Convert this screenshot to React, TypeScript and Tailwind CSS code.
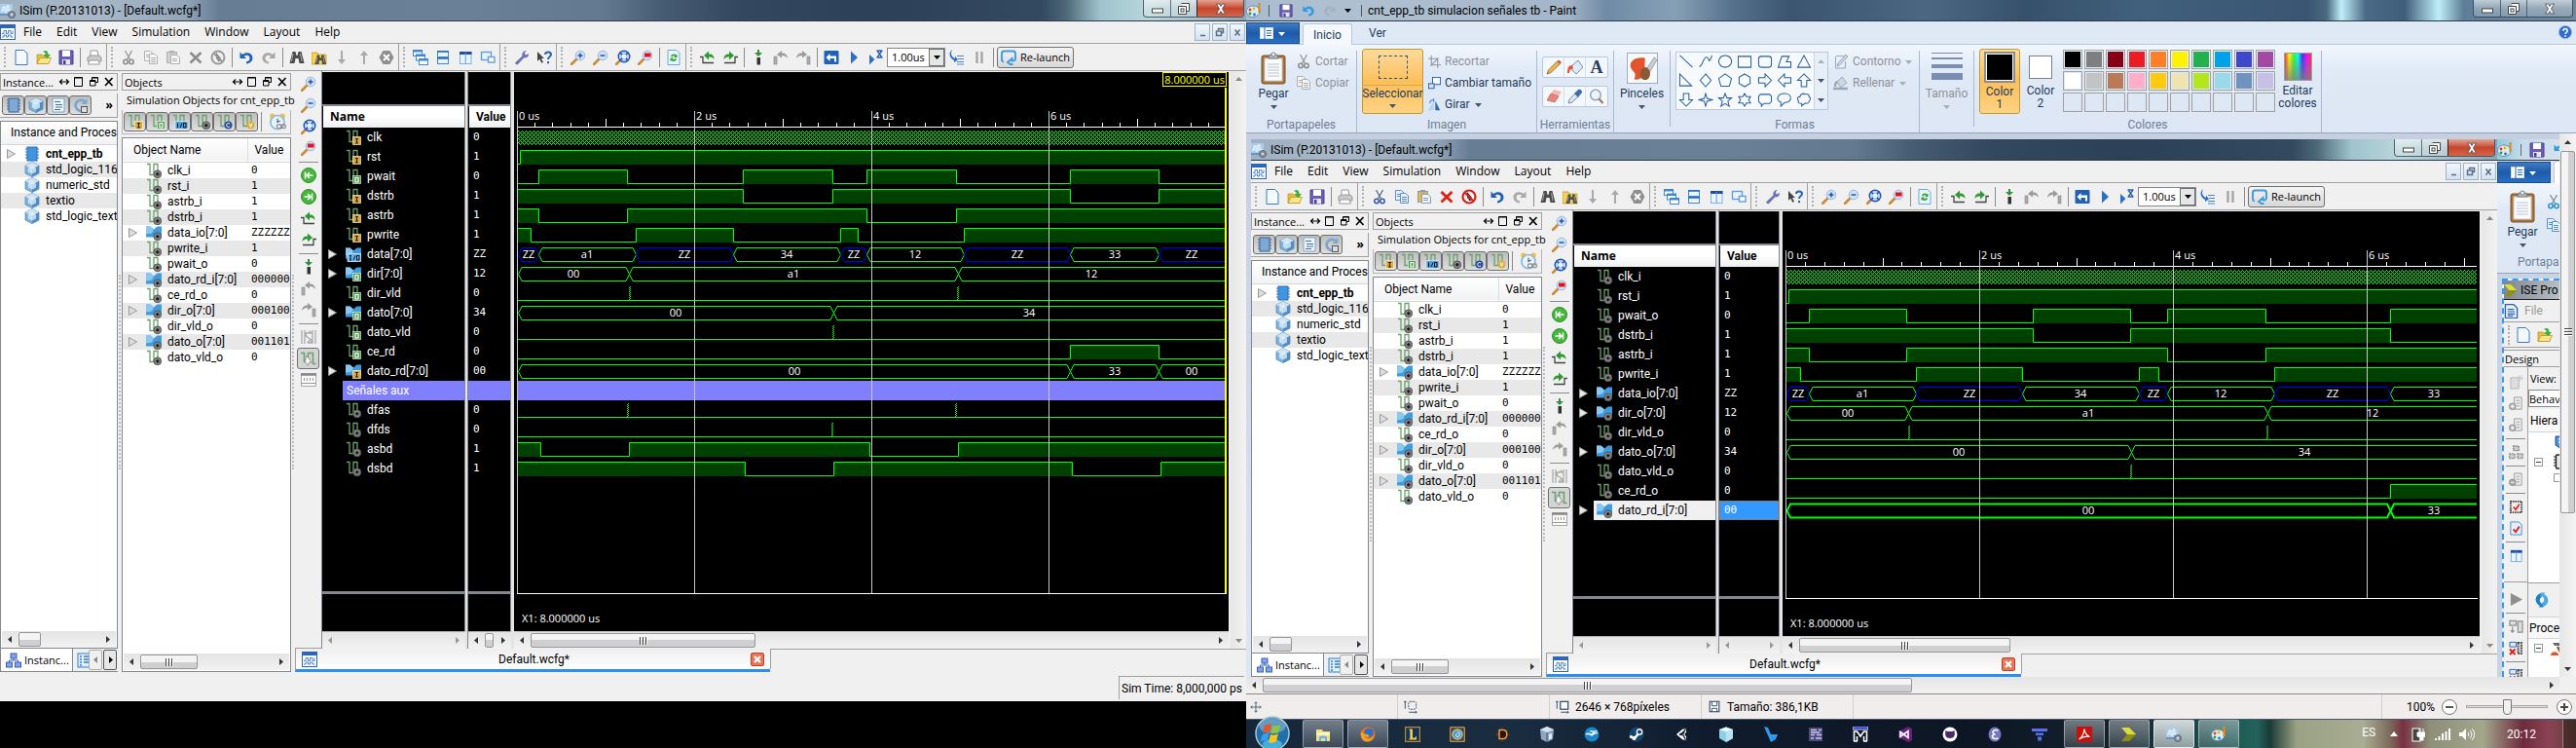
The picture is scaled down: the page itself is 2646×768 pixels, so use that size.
import React from "react";

/* ------------------------------------------------------------------ */
/* Icons                                                                */
/* ------------------------------------------------------------------ */

const GREY = "#9a9a9a";

function magnifier(inner: React.ReactNode) {
  return (
    <>
      <path d="M1 15l5.5-5.5" stroke="#c98b3a" strokeWidth="2.6" strokeLinecap="round" />
      <circle cx="10" cy="6" r="4.8" fill="#cfe2f7" stroke="#9db7d8" />
      {inner}
    </>
  );
}

const scissors = (a: string, b: string) => (
  <>
    <path d="M4.5 1l5 9M11.5 1l-5 9" stroke={a} strokeWidth="1.4" fill="none" />
    <circle cx="5" cy="12.5" r="2.2" stroke={b} strokeWidth="1.5" fill="none" />
    <circle cx="11" cy="12.5" r="2.2" stroke={b} strokeWidth="1.5" fill="none" />
  </>
);

const sheets = (line: string, fill: string) => (
  <>
    <path d="M1.500 1.500h6l2.500 2.500v7.500h-8.500z" fill={fill} stroke={line} />
    <path d="M6.500 4.500h5.500l2.500 2.500v7.500h-8z" fill={fill} stroke={line} />
    <path d="M8 8.500h5M8 10.500h5M8 12.500h5M3 5.500h3M3 7.500h3" stroke={line} />
  </>
);

const clipboard = (board: string, line: string, fill: string) => (
  <>
    <rect x="1.500" y="2.500" width="10" height="11" fill={board} stroke={line} />
    <rect x="4" y="1" width="5" height="2.500" fill={line} />
    <path d="M5.500 5.500h6l3 2.500v6.500h-9z" fill={fill} stroke={line} />
    <path d="M7 9.500h5M7 11.500h5" stroke={line} />
  </>
);

const waveIcon = (badge: React.ReactNode) => (
  <>
    <path d="M1 1.500h3v11h4v-11h4v8" stroke="#6aa06a" strokeWidth="1.300" fill="none" />
    {badge}
  </>
);

const busIcon = (badge: React.ReactNode) => (
  <>
    <path d="M0 1.500h4.500l3.500 3 3.500-3h4.500v11h-16z" fill="#3f9be0" />
    <path d="M0 1.500h4.500l3.500 3-2 4-6 1z" fill="#8ac8f2" />
    {badge}
  </>
);

const plusBadge = (
  <>
    <circle cx="11.800" cy="11.800" r="3.900" fill="#858585" stroke="#555" />
    <path d="M11.800 10v3.600M10 11.800h3.600" stroke="#111" strokeWidth="1.200" />
  </>
);

const glyphBadge = (bg: string, d: string, fg: string) => (
  <>
    <rect x="7.500" y="7.500" width="8" height="8" fill={bg} stroke="#fff" strokeOpacity=".6" />
    <path d={d} stroke={fg} strokeWidth="1.200" fill="none" />
  </>
);

const I_GLYPH = "M10 9.500h3M11.500 9.500v4.500M10 14h3";
const O_GLYPH = "M10 9.500h3v4.500h-3z";

const stepArrow = (c: string, flip: boolean) => (
  <g transform={flip ? "translate(16 0) scale(-1 1)" : undefined}>
    <path d="M0 7.500h3v6h11" stroke="#444" strokeWidth="1.300" fill="none" />
    <path d="M4 6l5-4.500v3c4 0 5.500 2 5.500 5.500-1.500-2-3-2.500-5.500-2.500v3z" fill={c} />
  </g>
);

const hopArrow = (flip: boolean) => (
  <g transform={flip ? "translate(16 0) scale(-1 1)" : undefined}>
    <rect x="1" y="7" width="3" height="8" fill="#aaa" stroke="#888" strokeWidth=".6" />
    <path d="M4 5l5-4v2.600c4 0 5.500 2 6 5.400-1.500-2-3-3-6-3v2.600z" fill="#9b9b9b" />
  </g>
);

const hexStop = (fill: string) => (
  <>
    <path d="M4.500 1h7l4 7-4 7h-7l-4-7z" fill={fill} />
    <path d="M5 5l6 6M11 5l-6 6" stroke="#fff" strokeWidth="2" />
  </>
);

const binoc = (
  <>
    <path d="M3.500 2h3l1 4h1l1-4h3l3 12h-5l-1-5h-3l-1 5h-5z" fill="#4b4b4b" />
    <path d="M4 4l-1.500 8M11.500 4l1.500 8" stroke="#aaa" />
  </>
);

const cube = (
  <>
    <path d="M8 .5l7 3.500v8l-7 3.500-7-3.500v-8z" fill="#7fb2dc" stroke="#5688b5" strokeWidth=".8" />
    <path d="M8 .5l7 3.500-7 3.500-7-3.500z" fill="#cfe5f6" />
    <path d="M8 7.500l7-3.500v8l-7 3.500z" fill="#4f8fc6" />
    <path d="M8 4.500l4 2v4l-4 2-4-2v-4z" fill="#e3f1fb" opacity=".75" />
  </>
);

const palette = (
  <>
    <path d="M7 3c4 0 7 2.300 7 5.500 0 3.500-3.500 6-7 6-4 0-6.500-2.500-6.500-6 0-3 2.500-5.500 6.500-5.500z" fill="#d9ecf5" stroke="#5a8fae" />
    <circle cx="4" cy="7" r="1.400" fill="#e33" />
    <circle cx="8" cy="6" r="1.400" fill="#f5b400" />
    <circle cx="4" cy="11" r="1.400" fill="#2a9d3a" />
    <circle cx="8.500" cy="12" r="1.400" fill="#2b6fd0" />
    <path d="M13.500 0v10" stroke="#e08a20" strokeWidth="2.200" />
  </>
);

const floppy = (
  <>
    <path d="M1 1h14v14h-14z" fill="#6a5fb5" stroke="#4a4190" />
    <rect x="4" y="1" width="8" height="6" fill="#fff" />
    <rect x="4" y="10" width="8" height="5" fill="#e6e6f4" />
    <rect x="5" y="11" width="2.500" height="4" fill="#4a4190" />
  </>
);

const folderArrow = (
  <>
    <path d="M1 5h5l1 1.500h6v8h-12z" fill="#e7bf3c" stroke="#b98f1b" strokeWidth=".7" />
    <path d="M1 14.500l3-6h11.500l-2.800 6z" fill="#fbe58a" stroke="#b98f1b" strokeWidth=".7" />
    <path d="M7 2c3-2 5.500-.5 5.500 3h2.500l-3.800 4-3.700-4h2.200c0-2-1-2.500-2.700-3z" fill="#3cae3c" />
  </>
);

const newDoc = (
  <path d="M2 .5h8.500l3.500 3.500v11.500h-12z" fill="#f4f9ff" stroke="#3f78c3" />
);

const undoPath = "M1.500 2.500v6.500h6.500l-2.300-2.300c2.500-2 5.800-.8 5.800 2 0 2-1.300 3.300-3.500 3.800v2c4-.3 6.500-2.500 6.500-5.900 0-5-6-7-10.500-3.700z";

const ICONS: Record<string, React.ReactNode> = {
  new: newDoc,
  open: folderArrow,
  save: floppy,
  print: (
    <>
      <path d="M4 1h7l1 6h-8z" fill="#fff" stroke={GREY} />
      <path d="M1 8l2-2h10l2 2v4h-14z" fill="#c9c9c9" stroke={GREY} />
      <path d="M3 11h9l1.500 4h-12z" fill="#fff" stroke={GREY} />
    </>
  ),
  cutGrey: scissors(GREY, "#8a8a8a"),
  cut: scissors("#5c6f8c", "#2f5aa8"),
  cutBlue: scissors("#8b8f96", "#2b8fd0"),
  copyGrey: sheets("#b0b0b0", "#f6f6f6"),
  copy: sheets("#5b8fd0", "#e9f3ff"),
  pasteGrey: clipboard("#d0d0d0", "#b0b0b0", "#f6f6f6"),
  paste: clipboard("#e6b84a", "#8a9bb5", "#eef5ff"),
  delGrey: <path d="M2.500 3l11 10.500M13.500 3l-11 10.500" stroke="#8d8d8d" strokeWidth="2.600" />,
  del: <path d="M2.500 3l11 10.500M13.500 3l-11 10.500" stroke="#dd1f14" strokeWidth="2.800" />,
  noselGrey: (
    <>
      <circle cx="8" cy="8" r="6.500" fill="none" stroke={GREY} strokeWidth="2" />
      <path d="M6 3l5 6-2 0 1 3-2 0-1-3-1 1z" fill="#777" />
      <path d="M3.500 3.500l9 9" stroke={GREY} strokeWidth="2" />
    </>
  ),
  nosel: (
    <>
      <circle cx="8" cy="8" r="6.500" fill="none" stroke="#d3221a" strokeWidth="2.200" />
      <path d="M6 3l5 6-2 0 1 3-2 0-1-3-1 1z" fill="#222" />
      <path d="M3.500 3.500l9 9" stroke="#d3221a" strokeWidth="2.200" />
    </>
  ),
  undo: <path d={undoPath} fill="#1d62b8" />,
  redo: <path d={undoPath} transform="translate(16 0) scale(-1 1)" fill="#a8a8a8" />,
  undoLight: <path d={undoPath} fill="#2e9be6" />,
  redoLight: <path d={undoPath} transform="translate(16 0) scale(-1 1)" fill="#9fb3c6" />,
  binoc,
  findFiles: (
    <>
      <path d="M0 3h6l1 2h8v10h-15z" fill="#f3d34f" stroke="#b98f1b" strokeWidth=".7" />
      <g transform="translate(3 4) scale(.78)">{binoc}</g>
    </>
  ),
  down: <path d="M7 1h2v9h3l-4 5-4-5h3z" fill="#a9a9a9" />,
  up: <path d="M7 15h2v-9h3l-4-5-4 5h3z" fill="#a9a9a9" />,
  stop: hexStop("#8f8f8f"),
  cascade: (
    <>
      {[[0.5, 0.5], [3.5, 5], [6.500, 9.500]].map(([x, y]) => (
        <g key={x}>
          <rect x={x} y={y} width="9" height="6" fill="#fff" stroke="#3f87d6" />
          <rect x={x} y={y} width="9" height="2" fill="#3f87d6" />
        </g>
      ))}
    </>
  ),
  tileH: (
    <>
      <rect x="2.500" y="1.500" width="11" height="6" fill="#eaf4ff" stroke="#3f87d6" />
      <rect x="2.500" y="8.500" width="11" height="6" fill="#eaf4ff" stroke="#3f87d6" />
      <path d="M2 2h12M2 9h12" stroke="#2767b8" strokeWidth="1.500" />
    </>
  ),
  tileV: (
    <>
      <rect x="2.500" y="2.500" width="11.500" height="12" fill="#eaf4ff" stroke="#7fb0e4" />
      <path d="M2 3.500h12.500" stroke="#1f4fa0" strokeWidth="3" />
      <path d="M8.200 3v11" stroke="#5f98da" />
    </>
  ),
  layers: (
    <>
      <rect x="1.500" y="2.500" width="10" height="8" fill="#eaf4ff" stroke="#5f9fdf" strokeWidth="1.400" />
      <rect x="8.500" y="7.500" width="6.500" height="5.500" fill="#fff" stroke="#5f9fdf" strokeWidth="1.400" />
    </>
  ),
  wrench: (
    <path d="M1.500 13l7-6.500c-.8-3 1-5.500 4.200-5.500l-2 2.500 1.300 2 3-1.500c.3 3-2 4.800-4.700 4.300l-6.300 6.700c-1.500 1-3.500-.5-2.500-2z" fill="#6c72b8" />
  ),
  whats: (
    <>
      <path d="M1 2l7 7h-3l2 4-1.800.8-1.800-4-2.400 2z" fill="#444" />
      <path d="M9 5c0-3.500 6-3.500 6 0 0 2.300-3 2.300-3 5M12 12v2.200" stroke="#2a62b5" strokeWidth="2" fill="none" />
    </>
  ),
  zoomIn: magnifier(<path d="M10 3.500v5M7.500 6h5" stroke="#2355b0" strokeWidth="1.500" />),
  zoomOut: magnifier(<path d="M7.500 6h5" stroke="#2355b0" strokeWidth="1.500" />),
  zoomFit: (
    <>
      <path d="M1 15l3-3" stroke="#c98b3a" strokeWidth="2.600" strokeLinecap="round" />
      <circle cx="9" cy="7" r="5.800" fill="#bcd6f5" stroke="#2355b0" strokeWidth="1.400" />
      <path d="M4.500 2.500l9 9M13.500 2.500l-9 9" stroke="#2355b0" strokeWidth="1.600" />
      <rect x="7" y="5" width="4" height="4" fill="#e6f1ff" />
    </>
  ),
  zoomRed: magnifier(<rect x="7" y="3.500" width="6.500" height="4" fill="#e8101c" />),
  refreshDoc: (
    <>
      <path d="M2 .5h9l3 3v12h-12z" fill="#eaf6ff" stroke="#6aa9dd" />
      <path d="M5 7c1-3 4-3 5.500-1.500l1-1v3.500h-3.500l1.200-1.200c-1.200-.8-2.200-.5-2.700.6zM11 9.500c-1 3-4 3-5.500 1.500l-1 1v-3.500h3.500l-1.200 1.200c1.200.8 2.200.5 2.700-.6z" fill="#2fa32f" />
    </>
  ),
  prevTrans: stepArrow("#2f9a2f", false),
  nextTrans: stepArrow("#2f9a2f", true),
  addMarker: (
    <>
      <path d="M7 0h2v3h3l-4 4-4-4h3z" fill="#2f8f3a" />
      <rect x="6.500" y="8" width="3.500" height="7.500" fill="#333" />
    </>
  ),
  prevMarker: hopArrow(false),
  nextMarker: hopArrow(true),
  restart: (
    <>
      <rect x=".5" y="1" width="15" height="14" rx="1" fill="#1f62b5" />
      <path d="M2.500 8l4-4v2.500h6.500v6h-2v-3.500h-4.500v3z" fill="#fff" />
    </>
  ),
  run: <path d="M5 1.500l7 6.500-7 6.500z" fill="#2b6fc6" />,
  runFor: (
    <>
      <path d="M1 5l5.500 5-5.500 5.500z" fill="#2b6fc6" />
      <path d="M8.500 1h6M8.500 8h6M9 1l5 7M14 1l-5 7" stroke="#2b5fa8" strokeWidth="1.300" />
    </>
  ),
  stepIn: (
    <>
      <path d="M3 0c-2 4-1 7 3 9v-2.500l3 4-4 2.500v-2c-5-2-6-8-2-11z" fill="#2b6fc6" />
      <path d="M8 6.500h7M9 9.500h6M8 12.500h7M8 15h7" stroke="#4a86c8" />
    </>
  ),
  pause: <path d="M5.500 2v12M10.500 2v12" stroke="#a5a5a5" strokeWidth="2.400" />,
  relaunch: (
    <path d="M3 12.500c-1.500 0-2-1-2-2.500v-6c0-1.700.7-2.500 2.500-2.500h9c1.700 0 2.500.8 2.500 2.500v5c0 1.700-1 2.500-2.500 2.500h-1v-2.500l-4.500 4 4.500 3.500v-2.500" fill="none" stroke="#3d9be0" strokeWidth="1.900" />
  ),
  goStart: (
    <>
      <circle cx="8" cy="8" r="7.500" fill="#47b63c" stroke="#2c8f24" />
      <path d="M4.500 4.500v7M12.500 8h-6M9 5l-3 3 3 3" stroke="#fff" strokeWidth="1.500" fill="none" />
    </>
  ),
  goEnd: (
    <>
      <circle cx="8" cy="8" r="7.500" fill="#47b63c" stroke="#2c8f24" />
      <path d="M11.500 4.500v7M3.500 8h6M7 5l3 3-3 3" stroke="#fff" strokeWidth="1.500" fill="none" />
    </>
  ),
  swap: (
    <>
      <path d="M1 1v14M4 1v14M12 1v14M15 1v14" stroke="#aaa" strokeWidth="1.300" />
      <path d="M5 4h6l-2-2.500M5 4v3l6 4v3l-4 0 2-3" stroke="#8f8f8f" fill="#ddd" />
    </>
  ),
  snap: (
    <>
      <path d="M0 2.500h3.500v9h4v-9h5v11h3" stroke="#6aa06a" strokeWidth="1.500" fill="none" />
      <path d="M6 5l5 7-2.600 0-1 3.500-3-4z" fill="#fff" stroke="#777" strokeWidth=".7" />
    </>
  ),
  ruler: (
    <>
      <rect x=".5" y="1.500" width="15" height="13" fill="#fafafa" stroke="#aaa" />
      <path d="M0 2.500h16" stroke="#888" strokeWidth="2.500" />
      <path d="M3.500 6v3M6.500 6v3M9.500 6v3M12.500 6v3M0 11.500h16" stroke="#999" />
    </>
  ),
  chip: (
    <>
      <path d="M1 3h14M1 6h14M1 9h14M1 12h14" stroke="#2c6eb5" strokeWidth="1.200" />
      <rect x="3" y="1" width="10" height="14" fill="#3f95e0" stroke="#2c6eb5" />
    </>
  ),
  chipBox: (
    <>
      <path d="M1 3h14M1 6h14M1 9h14M1 12h14" stroke="#39658f" strokeWidth="1.200" />
      <rect x="3" y="1" width="10" height="14" fill="#7fa8d6" stroke="#39658f" />
    </>
  ),
  cube,
  docLines: (
    <>
      <path d="M2 1h12v14h-12z" fill="#eef6fd" stroke="#7aa6cf" />
      <path d="M4 4.500h6M5 7.500h7M5 10h7M4 12.500h6" stroke="#4a6f96" />
    </>
  ),
  docBlue: (
    <>
      <path d="M1.500 .5h9l4 4v11h-13z" fill="#e6f0fb" stroke="#2b62b5" strokeWidth="1.400" />
      <path d="M4 6h7M4 8.500h8M4 11h8M4 13.200h6" stroke="#2b62b5" strokeWidth="1.200" />
    </>
  ),
  cycle: (
    <>
      <path d="M12 4.500a5.500 5.500 0 1 0 1.500 5" stroke="#7ba7d0" strokeWidth="2.800" fill="none" />
      <path d="M14.500 1v6h-6z" fill="#7ba7d0" />
      <rect x="8.500" y="9.500" width="6" height="6" fill="#ddd" stroke="#555" />
    </>
  ),
  wave: waveIcon(plusBadge),
  waveI: waveIcon(glyphBadge("#e3a92c", I_GLYPH, "#222")),
  waveO: waveIcon(glyphBadge("#4f9e4c", O_GLYPH, "#fff")),
  waveIO: waveIcon(
    <>
      <rect x="3" y="7.500" width="13" height="8" fill="#4aa3dd" stroke="#fff" strokeOpacity=".6" />
      <path d="M5.500 9.500v4.500M8 14l2-4.500M11.500 9.500h2.500v4.500h-2.500z" stroke="#112" fill="none" />
    </>,
  ),
  waveC: waveIcon(
    <>
      <circle cx="11.500" cy="11.500" r="4" fill="#2a4f9d" />
      <path d="M13 10a2 2 0 1 0 0 3" stroke="#fff" fill="none" />
    </>,
  ),
  waveV: waveIcon(
    <>
      <circle cx="11.500" cy="11.500" r="4" fill="#e0ae3a" />
      <path d="M10 9.500l1.500 4 1.500-4" stroke="#fff" fill="none" />
    </>,
  ),
  bus: busIcon(plusBadge),
  busI: busIcon(glyphBadge("#e3a92c", I_GLYPH, "#222")),
  busO: busIcon(glyphBadge("#4f9e4c", O_GLYPH, "#fff")),
  busIO: busIcon(
    <>
      <rect x="2" y="7.500" width="13.500" height="8" fill="#63b4ea" stroke="#d5ecfa" strokeWidth=".8" />
      <path d="M4 9.500h2M5 9.500v4.500M4 14h2M8 14l2-4.500M11.500 9.500h2.500v4.500h-2.500z" stroke="#112" fill="none" />
    </>,
  ),
  clock: (
    <>
      <circle cx="3.500" cy="3" r="2.500" fill="#f0c04a" />
      <circle cx="12.500" cy="3" r="2.500" fill="#f0c04a" />
      <circle cx="8" cy="8.500" r="6.300" fill="#e8f3fb" stroke="#8dbbdd" strokeWidth="1.500" />
      <path d="M8 5v3.500l2.500-1.500" stroke="#557" fill="none" />
      <rect x="7.500" y="10.500" width="4" height="3.500" rx="1.500" fill="none" stroke="#888" />
      <rect x="11.500" y="10.500" width="4" height="3.500" rx="1.500" fill="none" stroke="#888" />
    </>
  ),
  wcfg: (
    <>
      <rect x=".5" y=".5" width="15" height="15" fill="#fff" stroke="#2d66b8" />
      <rect x="0" y="0" width="16" height="4" fill="#2d66b8" />
      <path d="M2 9.500h2v-3h2.500v3h2v-3h2.500v3h2v-3M2 13h2v-2h2.500v2h2v-2h2.500v2h2.500" stroke="#4a80d0" fill="none" />
    </>
  ),
  hier: (
    <>
      <rect x="5" y="1" width="6" height="5" fill="#7fa5e8" stroke="#3b5fb5" />
      <rect x="0.500" y="10" width="6" height="5" fill="#7fa5e8" stroke="#3b5fb5" />
      <rect x="9.500" y="10" width="6" height="5" fill="#7fa5e8" stroke="#3b5fb5" />
      <path d="M8 6v2M3.500 10v-2h9v2" stroke="#3b5fb5" fill="none" />
    </>
  ),
  memory: (
    <>
      <rect x="1" y="1" width="13" height="14" fill="#e3f0fb" stroke="#2d7fcf" />
      <path d="M3 4h2M7 4h6M3 7h2M7 7h6M3 10h2M7 10h6M3 13h2" stroke="#2d7fcf" strokeWidth="1.500" />
    </>
  ),
  isim: (
    <>
      <rect x="0" y="1" width="13" height="12" fill="#a9cdea" />
      <path d="M1 8h2v-4h2v5h2v-6h2v5h3" stroke="#fff" fill="none" />
      <path d="M0 11h13v2h-13z" fill="#6b93bd" />
      <circle cx="12" cy="12" r="3.500" fill="#8a94a0" stroke="#596470" />
      <circle cx="12" cy="12" r="1.200" fill="#dde" />
    </>
  ),
  palette,
  crop: <path d="M4 0v12h12M0 4h12v12M3 13l10-10" stroke="#8a94a4" strokeWidth="1.300" fill="none" />,
  resize: (
    <>
      <rect x="5.500" y=".5" width="10" height="9" fill="#f4f9ff" stroke="#2a5f9e" strokeWidth="1.200" />
      <rect x=".5" y="8.500" width="7" height="6" fill="#cfe4f7" stroke="#2a5f9e" strokeWidth="1.200" />
    </>
  ),
  rotate: (
    <>
      <path d="M7 15v-12l-7 12z" fill="#b9d4ec" />
      <path d="M9 3v12h6z" fill="#2a6cb3" />
      <path d="M2 6c0-3 2-4 5-4M7 0v4.500" stroke="#3f8fd8" fill="none" strokeWidth="1.300" />
    </>
  ),
  pencil: (
    <>
      <path d="M1 15l1.500-4 9-9 3 2.500-9.500 9z" fill="#f0b84a" stroke="#7a5a2a" strokeWidth=".8" />
      <path d="M11.500 2l1.500-1.500 3 2.500-1.500 1.500z" fill="#c65a3a" />
    </>
  ),
  bucket: (
    <>
      <path d="M5 6l6-5 5 7-7 7-5-5z" fill="#dfeaf6" stroke="#6f8fb3" />
      <path d="M0 14c0-5 1-8 5-8l1 4c-3-1-4 1-4 4z" fill="#e2552c" />
    </>
  ),
  eraser: (
    <>
      <path d="M5 5l3-4 8 2-3 5z" fill="#f6b8ae" />
      <path d="M1 12l4-7 8 3-4 6z" fill="#e5857a" stroke="#b8655c" strokeWidth=".7" />
    </>
  ),
  picker: (
    <>
      <path d="M1 15l1-4 6-6 3 3-6 6z" fill="#d9e6f3" stroke="#6f8299" strokeWidth=".9" />
      <path d="M7 5l4-4c3-1 4 1 4 3l-4 5z" fill="#3c70ad" />
    </>
  ),
  lens: (
    <>
      <path d="M10 10l4.500 5" stroke="#a07a50" strokeWidth="2.200" />
      <circle cx="7" cy="6.500" r="5.300" fill="#e8f3fb" stroke="#8d99a8" strokeWidth="1.300" />
    </>
  ),
  outline: (
    <>
      <path d="M3 2.500h9M2.500 3v12h10v-7" stroke="#9aa8b8" fill="none" />
      <path d="M4 13l1-3 8-9 2 2-8 8.500z" fill="#cdd6e0" stroke="#9aa8b8" />
    </>
  ),
  fill: (
    <>
      <path d="M4 7l5-5 5 6-6 5z" fill="#cdd6e0" stroke="#9aa8b8" />
      <path d="M0 14h15M2 12c0-4 1-5 3-5" stroke="#9aa8b8" strokeWidth="2.400" fill="none" />
    </>
  ),
  helpRound: (
    <>
      <circle cx="8" cy="8" r="7.500" fill="#2f6cd0" stroke="#8fb2e8" />
      <path d="M5.500 6.500c0-3.500 5-3.500 5 0 0 2-2.500 1.800-2.500 3.800M8 11.500v2" stroke="#fff" strokeWidth="1.700" fill="none" />
    </>
  ),
  move: <path d="M8 1v14M1 8h14M6 3l2-2 2 2M6 13l2 2 2-2M3 6l-2 2 2 2M13 6l2 2-2 2" stroke="#24405e" fill="none" />,
  selSize: (
    <>
      <path d="M1.500 1v9M0 2.500l1.500-1.500 1.500 1.500" stroke="#24405e" fill="none" />
      <rect x="5.500" y="1.500" width="9" height="9" rx="2" fill="none" stroke="#24405e" strokeDasharray="2 1" />
      <path d="M6 14h9M13.500 12.500l1.500 1.500-1.500 1.500" stroke="#24405e" fill="none" />
    </>
  ),
  imgSize: (
    <>
      <path d="M1.500 1v9M0 2.500l1.500-1.500 1.500 1.500" stroke="#24405e" fill="none" />
      <rect x="5.500" y="1.500" width="9" height="9" fill="#fff" stroke="#24405e" strokeWidth="1.300" />
      <path d="M6 14h9M13.500 12.500l1.500 1.500-1.500 1.500" stroke="#24405e" fill="none" />
    </>
  ),
  disk: (
    <>
      <path d="M2.500 1.500h11v12h-11z" fill="#fff" stroke="#24405e" strokeWidth="1.200" />
      <path d="M5 2v4.500h6v-4.500M5 13.500v-4h6v4" stroke="#24405e" fill="none" />
    </>
  ),
  ise: (
    <>
      <path d="M0 1h8l7 7-7 7h-8l6-7z" fill="#8f8f18" />
      <path d="M0 1h8l7 7h-9z" fill="#dcdc3c" />
    </>
  ),
  plusDocGrey: (
    <>
      <path d="M6 1h8v13h-8zM8 4.500h4M8 7.500h4M8 10.500h4" fill="#eee" stroke="#9a9a9a" />
      <circle cx="4" cy="11" r="3.500" fill="#bbb" stroke="#8a8a8a" />
      <path d="M4 9v4M2 11h4" stroke="#fff" />
    </>
  ),
  minusDocGrey: (
    <>
      <path d="M6 1h8v13h-8zM8 4.500h4M8 7.500h4M8 10.500h4" fill="#eee" stroke="#9a9a9a" />
      <circle cx="4" cy="11" r="3.500" fill="#aaa" stroke="#8a8a8a" />
      <path d="M2 11h4" stroke="#fff" />
    </>
  ),
  newSrcGrey: (
    <>
      <path d="M2 3h9v12h-9z" fill="#ddd" stroke="#b5b5b5" />
      <path d="M12 0v7M9 3.500h7M10 1l5 5M15 1l-5 5" stroke="#c9c9c9" />
    </>
  ),
  modules: (
    <path d="M5 1h6v5h-6zM.500 9.500h6v5h-6zM9.500 9.500h6v5h-6z" fill="#ccc" stroke="#8a8a8a" strokeDasharray="2 1" strokeWidth="1.500" />
  ),
  chipCheck: (
    <>
      <rect x="2" y="2" width="12" height="12" fill="#eee" stroke="#333" strokeWidth="2" strokeDasharray="1.500 1" />
      <path d="M5 8l2.500 3 4-6" stroke="#d22" strokeWidth="1.800" fill="none" />
    </>
  ),
  chipBlack: (
    <>
      <path d="M0 3h16M0 6h16M0 9h16M0 12h16" stroke="#222" strokeWidth="1.200" />
      <rect x="2.500" y="1" width="11" height="14" rx="1" fill="#e8e8e8" stroke="#222" strokeWidth="1.400" />
    </>
  ),
  docCheck: (
    <>
      <path d="M2 1h9l3 3v11h-12z" fill="#e2f0fd" stroke="#4a8ad0" />
      <path d="M5 9l2.500 3 4-6" stroke="#d22" strokeWidth="2" fill="none" />
    </>
  ),
  runGrey: <path d="M2 1l13 7-13 7z" fill="#8f8f8f" />,
  sync: (
    <>
      <path d="M7 1c-7 2-7 10-1 13l-1.500 1.500h5v-5l-1.500 1.500c-3-2-3-6 0-7z" fill="#1f7fc4" />
      <path d="M9 15c7-2 7-10 1-13l1.500-1.500h-5v5l1.500-1.500c3 2 3 6 0 7z" fill="#4aa9e0" />
    </>
  ),
  procGrey: (
    <path d="M1 1.500h7v5h-7zM10 2h5v12h-5zM4 8v6M2 12l2 2 2-2" fill="#ddd" stroke="#8f8f8f" strokeWidth="1.300" />
  ),
  procStop: (
    <>
      <path d="M1 1.500h7v5h-7z" fill="#dcebff" stroke="#2b62b5" />
      <path d="M10 2h4v12h-4z" fill="#ccc" stroke="#444" strokeWidth="1.800" strokeDasharray="2 1" />
      <path d="M1 9l6 6M7 9l-6 6" stroke="#e02018" strokeWidth="2.200" />
    </>
  ),
  device: (
    <>
      <path d="M2 2h12v9l-6 4-6-4z" fill="#3f95e0" stroke="#24508c" />
      <path d="M5 5h6M5 8h6" stroke="#fff" strokeWidth="1.500" />
    </>
  ),
  hammer: (
    <>
      <path d="M2 2h9l3 3-3 2-2-2-5 0z" fill="#6b6b6b" />
      <path d="M7 6l5 9" stroke="#8b5a2b" strokeWidth="2.500" />
      <path d="M0 15c0-5 8-5 8 0z" fill="#e2552c" />
    </>
  ),
};

function Icon({ name, size = "size-4" }: { name: string; size?: string }) {
  return (
    <svg viewBox="0 0 16 16" className={`${size} shrink-0`} fill="none" aria-hidden="true">
      {ICONS[name]}
    </svg>
  );
}

const UI = "font-[Roboto,'Open_Sans',sans-serif] text-xs";
const HEAD = "font-['Open_Sans','Noto_Sans',sans-serif] text-xs";
const SMALL = "font-['Open_Sans','Noto_Sans',sans-serif] text-[11px]";
const MONO = "font-['DejaVu_Sans_Mono',monospace] text-[11px]";

/* ------------------------------------------------------------------ */
/* Scroll bars                                                          */
/* ------------------------------------------------------------------ */

function Tri({ dir, tone = "text-[#333]" }: { dir: "left" | "right" | "up" | "down"; tone?: string }) {
  const d = {
    left: "M6 1v7l-4-3.500z",
    right: "M3 1v7l4-3.500z",
    up: "M1 6h7l-3.500-4z",
    down: "M1 3h7l-3.500 4z",
  }[dir];
  return (
    <svg viewBox="0 0 9 9" className={`size-[9px] ${tone}`} aria-hidden="true">
      <path d={d} fill="currentColor" />
    </svg>
  );
}

function HScroll({ thumb, grip = false }: { thumb?: string; grip?: boolean }) {
  const tone = thumb ? "text-[#333]" : "text-[#999]";
  return (
    <div className="flex h-[17px] w-full shrink-0 items-stretch overflow-hidden bg-gradient-to-b from-[#e4e4e4] to-[#f2f2f2]">
      <button aria-label="Scroll left" className="flex w-[17px] shrink items-center justify-center">
        <Tri dir="left" tone={tone} />
      </button>
      {thumb && (
        <div className={`${thumb} my-px flex items-center justify-center gap-px rounded-xs border border-[#979797] bg-gradient-to-b from-[#f4f4f4] from-50% to-[#cfcfd1] to-50%`}>
          {grip && [0, 1, 2].map((i) => <span key={i} className="h-2 w-[2px] border-l border-[#444] bg-white" />)}
        </div>
      )}
      <span className="flex-1" />
      <button aria-label="Scroll right" className="flex w-[17px] shrink items-center justify-center">
        <Tri dir="right" tone={tone} />
      </button>
    </div>
  );
}

/* ------------------------------------------------------------------ */
/* Window buttons                                                       */
/* ------------------------------------------------------------------ */

function CaptionButtons({ active }: { active: boolean }) {
  const base = "flex h-full items-center justify-center border-l border-[#33414f]/70 bg-gradient-to-b from-white/60 via-white/30 via-50% to-white/20";
  return (
    <div className="flex h-[18px] shrink-0 overflow-hidden rounded-b-sm border border-t-0 border-[#33414f]/80">
      <button aria-label="Minimizar" className={`${base} w-[27px] border-l-0`}>
        <svg viewBox="0 0 12 12" className="size-3"><rect x="0.500" y="6" width="11" height="4" fill="#fff" stroke="#444" /></svg>
      </button>
      <button aria-label="Restaurar" className={`${base} w-[27px]`}>
        <svg viewBox="0 0 12 12" className="size-3"><path d="M3.500.5h8v8h-2.500M.5 3.500h8v8h-8z" fill="#fff" stroke="#444" /><rect x="3" y="6" width="3" height="3" fill="none" stroke="#444" /></svg>
      </button>
      <button
        aria-label="Cerrar"
        className={active ? "flex w-12 items-center justify-center border-l border-[#431818] bg-gradient-to-b from-[#e0a395] via-[#c6452b] via-50% to-[#d4654a]" : `${base} w-[47px]`}
      >
        <svg viewBox="0 0 12 12" className="size-3"><path d="M1.500 1h3l1.500 2.500 1.500-2.500h3l-3 5 3 5h-3l-1.500-2.500-1.500 2.500h-3l3-5z" fill="#fff" stroke="#444" strokeWidth=".8" /></svg>
      </button>
    </div>
  );
}

/* ------------------------------------------------------------------ */
/* Waveforms                                                            */
/* ------------------------------------------------------------------ */

type Kind = "clock" | "level" | "bus" | "band";
interface Trace {
  name: string;
  value: string;
  icon: string;
  kind: Kind;
  /* level: first state followed by toggle times (us) */
  start?: 0 | 1;
  edges?: number[];
  spikes?: number[];
  /* bus: [end time, text] */
  segs?: [number, string][];
}

const END = 8;

const T_PWAIT = [0.236, 1.236, 2.54, 3.545, 3.934, 4.94, 6.236, 7.236];
const T_DSTRB = [2.54, 3.545, 6.236, 7.236];
const T_ASTRB = [0.236, 1.236, 3.934, 4.94];
const T_PWRITE = [0.143, 1.335, 2.434, 3.637, 3.84, 5.033];
const B_DATA: [number, string][] = [
  [0.236, "ZZ"], [1.335, "a1"], [2.434, "ZZ"], [3.637, "34"], [3.934, "ZZ"],
  [5.033, "12"], [6.236, "ZZ"], [7.236, "33"], [END + 1, "ZZ"],
];
const B_DIR: [number, string][] = [[1.258, "00"], [4.962, "a1"], [END + 1, "12"]];
const B_DATO: [number, string][] = [[3.555, "00"], [END + 1, "34"]];
const B_DATO_RD: [number, string][] = [[6.236, "00"], [7.236, "33"], [END + 1, "00"]];

const LEFT_TRACES: Trace[] = [
  { name: "clk", value: "0", icon: "waveI", kind: "clock" },
  { name: "rst", value: "1", icon: "waveI", kind: "level", start: 0, edges: [0.022] },
  { name: "pwait", value: "0", icon: "waveO", kind: "level", start: 0, edges: T_PWAIT },
  { name: "dstrb", value: "1", icon: "waveI", kind: "level", start: 1, edges: T_DSTRB },
  { name: "astrb", value: "1", icon: "waveI", kind: "level", start: 1, edges: T_ASTRB },
  { name: "pwrite", value: "1", icon: "waveI", kind: "level", start: 1, edges: T_PWRITE },
  { name: "data[7:0]", value: "ZZ", icon: "busIO", kind: "bus", segs: B_DATA },
  { name: "dir[7:0]", value: "12", icon: "busO", kind: "bus", segs: B_DIR },
  { name: "dir_vld", value: "0", icon: "waveO", kind: "level", start: 0, spikes: [1.263, 4.967] },
  { name: "dato[7:0]", value: "34", icon: "busO", kind: "bus", segs: B_DATO },
  { name: "dato_vld", value: "0", icon: "waveO", kind: "level", start: 0, spikes: [3.56] },
  { name: "ce_rd", value: "0", icon: "waveO", kind: "level", start: 0, edges: [6.236, 7.236] },
  { name: "dato_rd[7:0]", value: "00", icon: "busI", kind: "bus", segs: B_DATO_RD },
  { name: "Señales aux", value: "", icon: "", kind: "band" },
  { name: "dfas", value: "0", icon: "wave", kind: "level", start: 0, spikes: [1.24, 4.945] },
  { name: "dfds", value: "0", icon: "wave", kind: "level", start: 0, spikes: [3.545] },
  { name: "asbd", value: "1", icon: "wave", kind: "level", start: 1, edges: [0.258, 1.258, 3.962, 4.962] },
  { name: "dsbd", value: "1", icon: "wave", kind: "level", start: 1, edges: [2.556, 3.555, 6.258, 7.258] },
];

const RIGHT_NAMES = [
  "clk_i", "rst_i", "pwait_o", "dstrb_i", "astrb_i", "pwrite_i", "data_io[7:0]",
  "dir_o[7:0]", "dir_vld_o", "dato_o[7:0]", "dato_vld_o", "ce_rd_o", "dato_rd_i[7:0]",
];
const RIGHT_TRACES: Trace[] = RIGHT_NAMES.map((name, i) => ({
  ...LEFT_TRACES[i],
  name,
  icon: LEFT_TRACES[i].kind === "bus" ? "bus" : "wave",
}));

const ROW0 = 57;
const ROW = 20;
const X0 = 4;
const GREEN = "#00ff00";

function TraceShape({ t, y, scale, endX, thick }: { t: Trace; y: number; scale: number; endX: number; thick: boolean }) {
  const px = (us: number) => Math.min(endX, Math.round(X0 + us * scale));
  const hi = y + 3.5;
  const lo = y + 17.5;
  const mid = y + 10.5;
  if (t.kind === "clock") return <rect x={X0} y={y + 3} width={endX - X0} height={15} fill="url(#hatch)" />;
  if (t.kind === "band") return <rect x={X0} y={y} width={endX - X0} height={20} fill="#8080ff" />;
  if (t.kind === "level") {
    let state = t.start ?? 0;
    let x = X0;
    let d = `M${x} ${state ? hi : lo}`;
    const fills: [number, number][] = [];
    for (const e of [...(t.edges ?? []), END + 1]) {
      const nx = px(e);
      if (state) fills.push([x, nx]);
      if (nx >= endX) {
        d += `H${nx}`;
        break;
      }
      d += `H${nx + 0.5}`;
      state = state ? 0 : 1;
      d += `V${state ? hi : lo}`;
      x = nx;
    }
    return (
      <g>
        {fills.map(([a, b]) => <rect key={a} x={a} y={y + 4} width={b - a} height={14} fill="#004000" />)}
        <path d={d} stroke={GREEN} fill="none" />
        {(t.spikes ?? []).map((s) => (
          <g key={s} stroke={GREEN} strokeDasharray="1 1">
            <path d={`M${px(s) + 0.5} ${y + 3}V${y + 18}`} />
            <path d={`M${px(s) - 0.5} ${y + 4}V${y + 18}`} />
          </g>
        ))}
      </g>
    );
  }
  let from = 0;
  return (
    <g>
      {(t.segs ?? []).map(([end, text]) => {
        const a = px(from);
        const b = px(end);
        from = end;
        if (a >= endX) return null;
        const open = b >= endX;
        const colour = text === "ZZ" ? "#0000ff" : GREEN;
        const d = open
          ? `M${b} ${hi}H${a + 4}L${a + 0.5} ${mid}L${a + 4} ${lo}H${b}`
          : `M${b + 0.5} ${mid}L${b - 3} ${hi}H${a + 4}L${a + 0.5} ${mid}L${a + 4} ${lo}H${b - 3}Z`;
        return (
          <g key={a}>
            <path d={d} stroke={colour} strokeWidth={thick ? 2 : 1} fill="none" />
            <text x={Math.round((a + b) / 2)} y={y + 14} fill="#fff" textAnchor="middle" className={SMALL}>{text}</text>
          </g>
        );
      })}
    </g>
  );
}

function WaveCanvas({ traces, scale, endX, cursor, thickRow }: { traces: Trace[]; scale: number; endX: number; cursor: boolean; thickRow: number }) {
  const ticks = Array.from({ length: 40 }, (_, i) => i).filter((i) => X0 + i * 0.2 * scale < endX);
  return (
    <svg className="block size-full" aria-label="Waveforms">
      <defs>
        <pattern id="hatch" width="4" height="4" patternUnits="userSpaceOnUse">
          <path d="M0 0h1v1h-1zM1 1h1v1h-1zM3 1h1v1h-1zM2 2h1v1h-1zM1 3h1v1h-1zM3 3h1v1h-1z" fill={GREEN} />
        </pattern>
      </defs>
      {ticks.map((i) => {
        const x = Math.round(X0 + i * 0.2 * scale) - 0.5;
        return <path key={i} d={`M${x} ${i % 10 === 0 ? 40 : i % 5 === 0 ? 48 : 52}V56`} stroke="#fff" />;
      })}
      <path d={`M${X0} 56.500H${endX}`} stroke="#fff" />
      {[0, 2, 4, 6].map((u) => (
        <text key={u} x={Math.round(X0 + u * scale) + 1} y={49} fill="#fff" className={SMALL}>{u} us</text>
      ))}
      {traces.map((t, i) => (
        <TraceShape key={t.name} t={t} y={ROW0 + i * ROW} scale={scale} endX={endX} thick={i === thickRow} />
      ))}
      {[0, 2, 4, 6].map((u) => (
        <rect key={u} x={Math.round(X0 + u * scale) - 1} y={40} width={1} height="100%" fill="#c8c8c8" />
      ))}
      {cursor && <rect x={endX} y={16} width={2} height="100%" fill="#ffff00" />}
    </svg>
  );
}

/* ------------------------------------------------------------------ */
/* ISim window                                                          */
/* ------------------------------------------------------------------ */

function toolItems(editable: boolean): string[] {
  const e = (n: string) => (editable ? n : `${n}Grey`);
  return [
    "#", "new", "open", "save", "|", "print",
    "#", e("cut"), e("copy"), e("paste"), e("del"), e("nosel"), "|", "undo", "redo", "|", "binoc", "findFiles", "down", "up", "stop",
    "#", "cascade", "tileH", "tileV", "layers",
    "#", "wrench", "whats",
    "#", "zoomIn", "zoomOut", "zoomFit", "zoomRed", "|", "refreshDoc",
    "#", "prevTrans", "nextTrans", "|", "addMarker", "prevMarker", "nextMarker", "|", "restart", "run", "runFor",
  ];
}

function ToolButton({ name }: { name: string }) {
  return (
    <button aria-label={name} className="flex h-6 w-[23px] shrink-0 items-center justify-center">
      <Icon name={name} />
    </button>
  );
}

const Sep = () => <span className="flex w-[6px] shrink-0 justify-center"><span className="h-5 w-px bg-[#8c8c8c]" /></span>;

function Grip({ first }: { first: boolean }) {
  return (
    <span className={first ? "flex w-[10px] shrink-0 self-stretch pl-1" : "flex w-3 shrink-0 self-stretch pl-px"}>
      {!first && <span className="mr-1 w-px bg-[#a0a0a0]" />}
      <span className="my-[3px] w-[3px] border-l-2 border-dotted border-[#b0b0b0]" />
    </span>
  );
}

function DockTitle({ title }: { title: string }) {
  return (
    <div className={`${SMALL} flex h-[18px] shrink-0 items-center border border-[#a0a0a0] px-[2px]`}>
      <span className="flex-1 whitespace-nowrap">{title}</span>
      <svg viewBox="0 0 58 12" className="h-3 w-[58px] shrink-0" stroke="#000" fill="none" aria-hidden="true">
        <path d="M1 6h10M4 3.500l-2.500 2.500 2.500 2.500M8 3.500l2.500 2.500-2.500 2.500" strokeWidth="1.200" />
        <path d="M17 2h8M16.500 1.500h8v9h-8z" />
        <path d="M34.500 4v-2.500h6v5h-2.500M32.500 4.500h5.500v5.500h-5.500zM32.500 5.500h5.500M34.500 2h6" />
        <path d="M48 2l7.500 8M55.500 2l-7.500 8" strokeWidth="1.700" />
      </svg>
    </div>
  );
}

function Splitter() {
  return (
    <div className="flex w-1 shrink-0 items-center justify-center">
      <span className="h-[200px] border-l-2 border-dotted border-[#bdbdbd]" />
    </div>
  );
}

const OBJECTS: [string, string, boolean][] = [
  ["clk_i", "0", false], ["rst_i", "1", false], ["astrb_i", "1", false], ["dstrb_i", "1", false],
  ["data_io[7:0]", "ZZZZZZ", true], ["pwrite_i", "1", false], ["pwait_o", "0", false],
  ["dato_rd_i[7:0]", "000000", true], ["ce_rd_o", "0", false], ["dir_o[7:0]", "000100", true],
  ["dir_vld_o", "0", false], ["dato_o[7:0]", "001101", true], ["dato_vld_o", "0", false],
];

const Expander = ({ tone }: { tone: string }) => (
  <svg viewBox="0 0 9 10" className="h-[10px] w-[9px] shrink-0" aria-hidden="true">
    <path d="M.5.5l8 4.500-8 4.500z" className={tone} />
  </svg>
);

const PRESSED = "flex h-5 w-[23px] items-center justify-center rounded-[3px] border border-[#6f6f6f] bg-gradient-to-b from-[#bdbdbd] to-[#dedede]";

function InstancePanel() {
  return (
    <section className="flex w-[121px] shrink-0 flex-col pt-[2px]">
      <DockTitle title="Instance..." />
      <div className="mt-[3px] flex h-[25px] shrink-0 items-center border-r border-b border-[#a0a0a0] pl-[2px]">
        {["chipBox", "cube", "docLines", "cycle"].map((n) => (
          <button key={n} aria-label={n} className={PRESSED}><Icon name={n} /></button>
        ))}
        <span className={`${HEAD} flex-1 pr-1 text-right font-bold`}>»</span>
      </div>
      <div className="mt-[3px] flex min-h-0 flex-1 flex-col border border-[#828790] bg-white">
        <div className={`${UI} h-6 shrink-0 overflow-hidden border-b border-[#d5d5d5] bg-gradient-to-b from-white to-[#f1f2f4] pl-[10px] leading-[23px] whitespace-nowrap`}>
          Instance and Process
        </div>
        <ul className="min-h-0 flex-1 overflow-hidden pt-px">
          {["cnt_epp_tb", "std_logic_1164", "numeric_std", "textio", "std_logic_texti"].map((n, i) => (
            <li key={n} className={`${UI} flex h-4 items-center whitespace-nowrap ${i % 2 ? "bg-[#e8e8e8]" : ""}`}>
              <span className="w-6 shrink-0 pl-[6px]">{i === 0 && <Expander tone="fill-[#ddd] stroke-[#999]" />}</span>
              <Icon name={i === 0 ? "chip" : "cube"} />
              <span className={i === 0 ? "pl-[6px] font-bold" : "pl-[6px]"}>{n}</span>
            </li>
          ))}
        </ul>
        <div className="px-px"><HScroll thumb="w-[23px]" /></div>
      </div>
      <div className="flex h-6 shrink-0 overflow-hidden">
        <button className={`${SMALL} flex w-[75px] items-center gap-[3px] border border-t-0 border-[#828790] bg-white pl-[5px] whitespace-nowrap`}>
          <Icon name="hier" />Instanc...
        </button>
        <div className="flex flex-1 items-center border-b border-[#828790] pl-1">
          <span className="w-3 overflow-hidden"><Icon name="memory" /></span>
          <button aria-label="Previous tab" className="flex h-[21px] w-[14px] items-center justify-center rounded-xs border border-[#ababab] bg-[#f0f0f0]"><Tri dir="left" tone="text-[#888]" /></button>
          <button aria-label="Next tab" className="ml-px flex h-[21px] w-[14px] items-center justify-center rounded-xs border border-[#555] bg-[#e6e6e6]"><Tri dir="right" tone="text-black" /></button>
        </div>
      </div>
    </section>
  );
}

function ObjectsPanel() {
  return (
    <section className="flex w-[174px] shrink-0 flex-col pt-[2px]">
      <DockTitle title="Objects" />
      <p className={`${SMALL} h-5 shrink-0 pl-[5px] leading-[19px] whitespace-nowrap`}>Simulation Objects for cnt_epp_tb</p>
      <div className="flex h-[25px] shrink-0 items-center border-r border-b border-l border-[#b5b5b5] pl-px">
        {["waveI", "waveO", "waveIO", "wave", "waveC", "waveV"].map((n) => (
          <button key={n} aria-label={n} className={PRESSED}><Icon name={n} /></button>
        ))}
        <Sep />
        <button aria-label="clock" className="flex flex-1 items-center justify-center"><Icon name="clock" size="size-[18px]" /></button>
      </div>
      <div className="mt-[3px] flex min-h-0 flex-1 flex-col border border-[#828790] bg-white">
        <table className="w-full table-fixed border-collapse">
          <thead>
            <tr className={`${UI} h-6 border-b border-[#d5d5d5] bg-gradient-to-b from-white to-[#f1f2f4] text-left`}>
              <th className="w-[128px] border-r border-[#dcdcdc] p-0 pl-[11px] font-normal">Object Name</th>
              <th className="p-0 pl-[7px] font-normal">Value</th>
            </tr>
          </thead>
          <tbody>
            {OBJECTS.map(([n, v, bus], i) => (
              <tr key={n} className={i % 2 ? "h-4 bg-[#e8e8e8]" : "h-4"}>
                <td className="p-0">
                  <span className={`${UI} flex h-4 items-center whitespace-nowrap`}>
                    <span className="w-6 shrink-0 pl-[6px]">{bus && <Expander tone="fill-[#ddd] stroke-[#999]" />}</span>
                    <Icon name={bus ? "bus" : "wave"} />
                    <span className="pl-[6px]">{n}</span>
                  </span>
                </td>
                <td className={`${MONO} p-0 pl-1 leading-4`}>{v}</td>
              </tr>
            ))}
          </tbody>
        </table>
        <span className="flex-1" />
        <div className="px-px pb-px"><HScroll thumb="w-[59px]" grip /></div>
      </div>
    </section>
  );
}

const SIDE = [
  "zoomIn", "zoomOut", "zoomFit", "zoomRed", "|", "goStart", "goEnd", "prevTrans", "nextTrans", "|",
  "addMarker", "prevMarker", "nextMarker", "|", "swap", "snap", "ruler",
];

interface IsimProps {
  editable: boolean;
  traces: Trace[];
  scale: number;
  endX: number;
  cursor: boolean;
  selected: number;
  valueWidth: string;
  waveThumb: string;
  valueThumb?: string;
  status?: string;
}

function WaveView(p: IsimProps) {
  return (
    <div className="flex min-w-0 flex-1">
      {/* names */}
      <div className="flex w-[148px] shrink-0 flex-col border-l border-[#828790] pt-px">
        <div className="flex min-h-0 flex-1 flex-col border-r border-[#828790] bg-black">
          <div className="h-[35px] shrink-0 border-b-2 border-[#828790]" />
          <div className={`${HEAD} h-[22px] shrink-0 border-l border-black bg-gradient-to-b from-white from-50% to-[#eceef0] pl-[7px] leading-[22px] font-bold text-black`}>Name</div>
          <ul className="min-h-0 flex-1 overflow-hidden border-b-[3px] border-[#828790] text-white">
            {p.traces.map((t, i) =>
              t.kind === "band" ? (
                <li key={t.name} className={`${UI} ml-[21px] h-5 bg-[#8080ff] pl-1 leading-5`}>{t.name}</li>
              ) : (
                <li key={t.name} className={`${UI} flex h-5 items-center`}>
                  <span className="w-[21px] shrink-0 pl-[6px]">{t.kind === "bus" && <Expander tone="fill-[#e8e8e8] stroke-[#999]" />}</span>
                  <span className={`flex h-full flex-1 items-center gap-[6px] pl-[3px] whitespace-nowrap ${i === p.selected ? "bg-[#f0f0f0] text-black" : ""}`}>
                    <Icon name={t.icon} />{t.name}
                  </span>
                </li>
              ),
            )}
          </ul>
          <div className="h-[38px] shrink-0" />
        </div>
        <div className="h-[18px] shrink-0 border-t border-[#b0b0b0]"><HScroll /></div>
      </div>
      <div className="w-[2px] shrink-0 bg-[#e4e4e4]" />
      {/* values */}
      <div className={`${p.valueWidth} flex shrink-0 flex-col border-l border-[#828790] pt-px`}>
        <div className="flex min-h-0 flex-1 flex-col border-r border-[#828790] bg-black">
          <div className="h-[35px] shrink-0 border-b-2 border-[#828790]" />
          <div className={`${UI} h-[22px] shrink-0 border-l border-black bg-gradient-to-b from-white from-50% to-[#eceef0] pl-[7px] leading-[22px] font-bold text-black`}>Value</div>
          <ul className="min-h-0 flex-1 overflow-hidden border-b-[3px] border-[#828790] text-white">
            {p.traces.map((t, i) => (
              <li
                key={t.name}
                className={`${MONO} h-5 pl-[5px] leading-5 ${t.kind === "band" ? "bg-[#8080ff]" : i === p.selected ? "bg-[#3399ff] outline outline-dotted -outline-offset-1 outline-[#cc6600]" : ""}`}
              >
                {t.value}
              </li>
            ))}
          </ul>
          <div className="h-[38px] shrink-0" />
        </div>
        <div className="h-[18px] shrink-0 border-t border-[#b0b0b0]"><HScroll thumb={p.valueThumb} /></div>
      </div>
      <div className="w-[3px] shrink-0 bg-[#e4e4e4]" />
      {/* waves */}
      <div className="flex min-w-0 flex-1 flex-col pt-px">
        <div className="relative flex min-h-0 flex-1 flex-col bg-black">
          <div className="min-h-0 flex-1 overflow-hidden">
            <WaveCanvas traces={p.traces} scale={p.scale} endX={p.endX} cursor={p.cursor} thickRow={p.selected} />
          </div>
          <div className="mr-[2px] ml-[3px] h-px shrink-0 bg-white" />
          <p className={`${SMALL} h-[38px] shrink-0 pt-[15px] pl-2 leading-5 text-white`}>X1: 8.000000 us</p>
          {p.cursor && (
            <span className={`${SMALL} absolute top-0 right-[2px] h-[15px] border border-[#ffff00] bg-black px-px leading-[13px] text-[#ffff00]`}>8.000000 us</span>
          )}
        </div>
        <div className="h-[18px] shrink-0 border-t border-[#c8c8c8]"><HScroll thumb={p.waveThumb} grip /></div>
      </div>
      <div className="ml-[2px] flex w-4 shrink-0 flex-col items-center justify-between bg-gradient-to-r from-[#e6e6e6] to-[#f2f2f2] py-1">
        <button aria-label="Scroll up"><Tri dir="up" tone="text-[#888]" /></button>
        <button aria-label="Scroll down"><Tri dir="down" tone="text-[#888]" /></button>
      </div>
    </div>
  );
}

const TITLE_LEFT =
  "bg-[linear-gradient(90deg,#9fb0c2_0,#a8b8c8_100px,#93a6b9_190px,#667d94_225px,#6a8096_480px,#63798f_620px,#465c73_680px,#33485e_760px,#2c4157_900px,#33495f_1070px,#4d6878_1095px,#9fc4cd_1130px,#b9d6da_1180px,#8ea5b5_1280px)]";

function Isim(p: IsimProps) {
  const items = toolItems(p.editable);
  return (
    <div className="flex min-h-0 min-w-0 flex-1 flex-col bg-[#f0f0f0] text-black">
      <header className={`${TITLE_LEFT} ${UI} flex h-[22px] shrink-0 items-start border-b border-[#2c3a48] pr-[2px]`}>
        <span className="flex h-[21px] flex-1 items-center gap-1">
          <Icon name="isim" />ISim (P.20131013) - [Default.wcfg*]
        </span>
        <CaptionButtons active />
      </header>
      <nav className={`${HEAD} flex h-[23px] shrink-0 items-center border-b border-[#a0a0a0]`}>
        <Icon name="wcfg" />
        <ul className="flex flex-1 gap-[15px] pl-2">
          {["File", "Edit", "View", "Simulation", "Window", "Layout", "Help"].map((m) => (
            <li key={m}><button>{m}</button></li>
          ))}
        </ul>
        <span className="flex gap-[2px] pr-px">
          {["M5 9.500h5", "M5.500 4v-1.500h5v4h-2M3.500 5h5v4.500h-5z", "M4.500 3.500l5 6M9.500 3.500l-5 6"].map((d) => (
            <button key={d} aria-label="Window control" className="h-[18px] w-4 border border-[#9db3cc] bg-gradient-to-b from-[#f2f7fd] to-[#d3e1f0]">
              <svg viewBox="0 0 14 13" className="h-[13px] w-[14px]"><path d={d} stroke="#5b6b80" strokeWidth="1.500" fill="none" /></svg>
            </button>
          ))}
        </span>
      </nav>
      <div className="flex h-7 shrink-0 items-center border-b border-[#a0a0a0]">
        {items.map((it, i) => (it === "|" ? <Sep key={i} /> : it === "#" ? <Grip key={i} first={i === 0} /> : <ToolButton key={i} name={it} />))}
        <label className="relative flex h-5 w-[60px] shrink-0 items-center border border-[#828790] bg-white">
          <select aria-label="Run time" className={`${SMALL} size-full appearance-none pl-1`} defaultValue="1.00us"><option>1.00us</option></select>
          <span className="pointer-events-none absolute top-0 right-0 flex h-full w-4 items-center justify-center border border-[#707070] bg-[#e6e6e6]"><Tri dir="down" tone="text-black" /></span>
        </label>
        <ToolButton name="stepIn" />
        <ToolButton name="pause" />
        <Sep />
        <button className={`${SMALL} ml-px flex h-[22px] items-center gap-1 rounded-[3px] border border-[#707070] bg-gradient-to-b from-[#f4f4f4] to-[#d8d8d8] px-[3px] whitespace-nowrap`}>
          <Icon name="relaunch" />Re-launch
        </button>
      </div>
      <div className="flex min-h-0 flex-1">
        <InstancePanel />
        <Splitter />
        <ObjectsPanel />
        <Splitter />
        <div className="flex min-w-0 flex-1 flex-col">
          <div className="flex min-h-0 flex-1">
            <div className="flex w-[27px] shrink-0 flex-col items-center border-b border-[#a0a0a0] pt-[2px]">
              {SIDE.map((n, i) =>
                n === "|" ? (
                  <span key={i} className="flex h-[6px] items-center"><span className="h-px w-5 bg-[#8c8c8c]" /></span>
                ) : (
                  <button key={i} aria-label={n} className={`flex h-[22px] w-[23px] shrink-0 items-center justify-center ${n === "snap" ? "rounded-[3px] border border-[#6f6f6f] bg-[#d4d4d4]" : ""}`}>
                    <Icon name={n} />
                  </button>
                ),
              )}
            </div>
            <WaveView {...p} />
          </div>
          <div className="flex h-6 shrink-0">
            <div className={`${UI} flex w-[488px] items-center border-b-[3px] border-l border-b-[#2a8fee] border-l-[#a0a0a0] bg-gradient-to-b from-[#eee] to-white px-[6px]`}>
              <Icon name="wcfg" />
              <span className="flex-1 text-center">Default.wcfg*</span>
              <button aria-label="Close tab" className="flex size-[14px] items-center justify-center rounded-xs border border-[#d03a24] bg-[#e07a58]">
                <svg viewBox="0 0 10 10" className="size-[10px]"><path d="M2 2l6 6M8 2l-6 6" stroke="#fff" strokeWidth="2.400" /></svg>
              </button>
            </div>
            <div className="mb-[3px] flex-1 border-t border-l border-[#a0a0a0]" />
          </div>
        </div>
      </div>
      {p.status && (
        <footer className="flex h-[30px] shrink-0 justify-end pt-1 pr-[2px] pb-[2px]">
          <span className={`${UI} flex items-center border-t border-l border-[#a0a0a0] px-[2px]`}>{p.status}</span>
        </footer>
      )}
    </div>
  );
}

/* ------------------------------------------------------------------ */
/* Paint window                                                         */
/* ------------------------------------------------------------------ */

const RIB = "font-[Roboto,'Open_Sans',sans-serif] text-xs text-[#1e395b]";
const DIM = "text-[#8d9098]";

function Group({ label, width, children }: { label?: string; width: string; children: React.ReactNode }) {
  return (
    <section className={`${width} flex shrink-0 flex-col py-[6px]`}>
      <div className="flex flex-1 flex-col border-r border-[#a9bad0]">
        <div className="flex h-[68px] items-start">{children}</div>
        {label && <h2 className="text-center leading-4 text-[#6d7f96]">{label}</h2>}
      </div>
    </section>
  );
}

const Drop = ({ tone = "text-[#44546a]" }: { tone?: string }) => <Tri dir="down" tone={tone} />;

const PasteBig = () => (
  <svg viewBox="0 0 26 34" className="h-[34px] w-[26px]" aria-hidden="true">
    <rect x="1" y="4" width="24" height="29" rx="2" fill="#a9743c" stroke="#7c5226" />
    <rect x="4" y="7" width="18" height="23" fill="#fbfbfb" stroke="#ccc" />
    <path d="M7 13h12M7 16h12M7 19h12M7 22h12M7 25h12" stroke="#b5c4d6" />
    <path d="M8 7l1.500-4h7l1.500 4z" fill="#b9bdc4" stroke="#767a82" />
    <circle cx="13" cy="3" r="2" fill="#fff" stroke="#767a82" />
  </svg>
);

function FileButton() {
  return (
    <button aria-label="Archivo" className="mt-px flex h-[22px] w-[55px] shrink-0 items-center justify-center gap-1 border border-[#1c4c8f] bg-gradient-to-b from-[#3f7cc4] via-[#1d5aa9] via-50% to-[#2a70c0]">
      <svg viewBox="0 0 14 12" className="h-3 w-[14px]"><rect x=".5" y=".5" width="13" height="11" fill="#fff" stroke="#cfe0f4" /><path d="M5 0v12M7 3.500h5M7 6h5M7 8.500h5" stroke="#2a62a8" /></svg>
      <Tri dir="down" tone="text-white" />
    </button>
  );
}

const SHAPES = [
  "M1 1l14 13", "M1 13c4 0 4-10 8-10s1 10 6-2", "M8 1a7 6.500 0 1 0 .1 0z", "M1 2h14v12h-14z",
  "M4 2h8c2 0 3 1 3 3v6c0 2-1 3-3 3h-8c-2 0-3-1-3-3v-6c0-2 1-3 3-3z", "M5 2h8l-3 6h5v6h-14z", "M8 1l7 13h-14z",
  "M1 1v13h13z", "M8 1l6 7-6 7-6-7z", "M8 1l7 5-2.500 8.500h-9l-2.500-8.500z", "M8 1l6 3.500v7l-6 3.500-6-3.500v-7z",
  "M1 5h7v-4l7 7-7 7v-4h-7z", "M15 5h-7v-4l-7 7 7 7v-4h7z", "M8 1l7 7h-4v7h-6v-7h-4z",
  "M5 1h6v7h4l-7 7-7-7h4z", "M8 1l1.500 5.500 5.500 1.500-5.500 1.500-1.500 5.500-1.500-5.500-5.500-1.500 5.500-1.500z",
  "M8 1l2 5h5l-4 3.500 1.500 5.500-4.500-3-4.500 3 1.500-5.500-4-3.500h5z", "M8 1l2 3.500h4.500l-2 3.500 2 3.500h-4.500l-2 3.500-2-3.500h-4.500l2-3.500-2-3.500h4.500z",
  "M3 2h10l2 2v6l-2 2h-6l-3 3v-3h-1l-2-2v-6z", "M8 1c9 0 9 10 0 10l-4 4v-4.500c-6-2-4-9.500 4-9.500z",
  "M4 3c2-2 4-2 5-1 2-1 5 0 4.500 2.500 2 1 2 3.500 0 5 0 2-2 3-4 2l-4 3 0-2.500c-3 0-4.500-1-3.500-3-2-2-1-5 1.500-4z",
];

const PALETTE = [
  "bg-[#000000]", "bg-[#7f7f7f]", "bg-[#880015]", "bg-[#ed1c24]", "bg-[#ff7f27]", "bg-[#fff200]", "bg-[#22b14c]", "bg-[#00a2e8]", "bg-[#3f48cc]", "bg-[#a349a4]",
  "bg-[#ffffff]", "bg-[#c3c3c3]", "bg-[#b97a57]", "bg-[#ffaec9]", "bg-[#ffc90e]", "bg-[#efe4b0]", "bg-[#b5e61d]", "bg-[#99d9ea]", "bg-[#7092be]", "bg-[#c8bfe7]",
  "", "", "", "", "", "", "", "", "", "",
];

const HOT = "rounded-[3px] border border-[#c29b29] bg-gradient-to-b from-[#fbdb9c] via-[#fdbf5a] via-50% to-[#fdd383]";

function Ribbon() {
  return (
    <div className={`${RIB} flex h-[92px] shrink-0 border-t border-b border-[#b6c8dd] border-b-[#93a5ba] bg-gradient-to-b from-[#f2f7fd] via-[#e0eaf6] via-30% to-[#dce6f4]`}>
      <Group label="Portapapeles" width="w-[114px]">
        <button className="mt-px ml-[10px] flex w-9 flex-col items-center leading-[18px]"><PasteBig />Pegar<Drop /></button>
        <div className={`${DIM} flex flex-col pl-[5px]`}>
          <button className="flex h-[22px] items-center gap-1"><Icon name="cutGrey" />Cortar</button>
          <button className="flex h-[22px] items-center gap-1"><Icon name="copyGrey" />Copiar</button>
        </div>
      </Group>
      <Group label="Imagen" width="w-[185px]">
        <button className={`${HOT} -mt-[2px] ml-[5px] flex h-[67px] w-[63px] shrink-0 flex-col items-center leading-4`}>
          <span className="flex h-[37px] w-full items-center justify-center border-b border-[#d9a844]"><span className="h-6 w-[30px] border border-dashed border-[#2a5080]" /></span>
          Seleccionar<Drop />
        </button>
        <div className="flex flex-col pl-[5px] [&>button]:flex [&>button]:h-[22px] [&>button]:items-center [&>button]:gap-1 [&>button]:whitespace-nowrap">
          <button className={DIM}><Icon name="crop" size="size-[13px]" />Recortar</button>
          <button><Icon name="resize" size="size-[13px]" />Cambiar tamaño</button>
          <button><Icon name="rotate" size="size-[13px]" />Girar<Drop /></button>
        </div>
      </Group>
      <Group label="Herramientas" width="w-[79px]">
        <div className="flex flex-col gap-2 pt-[6px] pl-[5px]">
          {[["pencil", "bucket", "text"], ["eraser", "picker", "lens"]].map((row) => (
            <div key={row[0]} className="flex rounded-xs border border-[#b6c8dd] bg-[#f4f8fc]">
              {row.map((n) => (
                <button key={n} aria-label={n} className="flex h-5 w-[22px] items-center justify-center border-r border-[#d5e0ec] last:border-0">
                  {n === "text" ? <span className="font-['Liberation_Serif',serif] text-lg leading-none font-bold text-[#24405e]">A</span> : <Icon name={n} />}
                </button>
              ))}
            </div>
          ))}
        </div>
      </Group>
      <Group width="w-[58px]">
        <button className="mt-px flex w-full flex-col items-center leading-[18px]">
          <svg viewBox="0 0 34 34" className="h-[34px] w-8" aria-hidden="true">
            <rect x=".5" y=".5" width="33" height="33" fill="#f6fafd" stroke="#98a8ba" />
            <path d="M20 6c-10-2-17 3-16 9s8 6 4 14c6 2 14-4 12-12-1-4 0-7 0-11z" fill="#e2552c" />
            <path d="M20 20l10-15 3 3-9 15z" fill="#c9ccd2" stroke="#777" strokeWidth=".6" />
            <ellipse cx="20" cy="23" rx="5.500" ry="7" fill="#8a5a34" />
          </svg>
          Pinceles<Drop />
        </button>
      </Group>
      <Group label="Formas" width="w-[256px]">
        <div className="mt-px ml-[5px] flex h-[60px] w-[157px] shrink-0 border border-[#b6c8dd] bg-[#f7fafd]">
          <div className="grid flex-1 grid-cols-7 place-items-center">
            {SHAPES.map((d) => (
              <button key={d} aria-label="Forma" className="flex items-center justify-center"><svg viewBox="0 0 16 16" className="h-[15px] w-4"><path d={d} fill="none" stroke="#2a5f9e" strokeWidth="1.100" /></svg></button>
            ))}
          </div>
          <div className="flex w-[14px] flex-col items-center justify-around border-l border-[#c9d6e6] bg-[#e6eef7]"><Tri dir="up" tone="text-[#aab4c0]" /><Drop /><Drop /></div>
        </div>
        <div className={`${DIM} flex flex-col pl-[5px]`}>
          <button className="flex h-[22px] items-center gap-1"><Icon name="outline" />Contorno<Drop tone="text-[#a5adb8]" /></button>
          <button className="flex h-[22px] items-center gap-1"><Icon name="fill" />Rellenar<Drop tone="text-[#a5adb8]" /></button>
        </div>
      </Group>
      <Group width="w-[56px]">
        <button className={`${DIM} flex w-full flex-col items-center leading-[18px]`}>
          <span className="flex h-[35px] w-8 flex-col gap-1 pt-[2px]"><span className="h-px bg-[#7b8db0]" /><span className="h-[2px] bg-[#7b8db0]" /><span className="mt-px h-1 bg-[#7b8db0]" /><span className="mt-px h-[7px] bg-[#7b8db0]" /></span>
          Tamaño<Drop tone="text-[#a5adb8]" />
        </button>
      </Group>
      <Group label="Colores" width="w-[357px]">
        <button className={`${HOT} -mt-[2px] ml-[5px] flex h-[67px] w-[42px] flex-col items-center leading-[13px]`}>
          <span className="mt-[2px] mb-[3px] size-8 border-2 border-[#8c8c8c] bg-black outline-1 -outline-offset-3 outline-white" />Color<br />1
        </button>
        <button className="ml-[3px] flex w-9 flex-col items-center leading-[13px]"><span className="mt-[5px] mb-[6px] h-6 w-6 border border-[#808080] bg-white" />Color<br />2</button>
        <div className="-mt-px ml-[5px] grid w-[220px] shrink-0 grid-cols-10 gap-y-[2px]">
          {PALETTE.map((c, i) => <button key={i} aria-label={`Color ${i + 1}`} className="size-5 border border-[#a0a0a0] p-px"><span className={`${c} block size-full`} /></button>)}
        </div>
        <button className="flex w-[42px] flex-col items-center leading-[13px]">
          <span className="mt-[2px] mb-[4px] size-[29px] border border-[#a0a0a0] bg-[linear-gradient(180deg,transparent,#808080cc),linear-gradient(90deg,#f33,#ff0,#3f3,#0ff,#33f,#f0f,#f33)] p-px" />
          Editar<br />colores
        </button>
      </Group>
    </div>
  );
}

const PAINT_TITLE =
  "bg-[linear-gradient(90deg,#a9bccf_0,#afc0d0_120px,#a3b5c8_330px,#6f8ba5_370px,#86a0b6_440px,#56718c_500px,#3b5570_560px,#4b6782_700px,#37516b_800px,#40607c_920px,#3a5571_1090px,#4a6a80_1110px,#bfeef8_1125px,#4a6a85_1150px,#3f5e7b_1190px,#bfeef8_1225px,#5f7f98_1250px,#6d879d_1366px)]";

const MiniSep = () => <span className="flex h-[6px] shrink-0 items-center"><span className="h-px w-5 bg-[#8c8c8c]" /></span>;

function MiniTools({ names }: { names: string[] }) {
  return (
    <>
      {names.map((n, i) =>
        n === "|" ? <MiniSep key={i} /> : <span key={i} className="flex h-[22px] shrink-0 items-center"><Icon name={n} size="size-[15px]" /></span>,
      )}
    </>
  );
}

function NestedPaint() {
  return (
    <div className="flex min-w-0 flex-1 flex-col overflow-hidden bg-[#dce6f4]">
      <div className="flex h-[22px] shrink-0 items-center gap-2 border-b border-[#2c3a48] bg-[linear-gradient(90deg,#8fc9de,#c6dbe8_40%,#d5e2ec)]">
        <Icon name="palette" /><span className="h-3 w-px shrink-0 bg-[#667]" /><Icon name="save" /><Icon name="undoLight" />
      </div>
      <div className="flex h-[23px] shrink-0"><FileButton /><span className="ml-[3px] w-5 shrink-0 rounded-t-sm border border-b-0 border-[#b6c8dd] bg-white" /></div>
      <div className={`${RIB} flex h-[93px] shrink-0 flex-col border-b border-[#93a5ba] bg-gradient-to-b from-[#f2f7fd] via-[#e0eaf6] via-30% to-[#dce6f4] pt-[7px]`}>
        <div className="flex h-[68px]">
          <button className="ml-2 flex w-9 shrink-0 flex-col items-center leading-[18px]"><PasteBig />Pegar<Drop /></button>
          <div className="flex flex-col gap-2 pt-1 pl-[6px]"><Icon name="cutBlue" /><Icon name="copy" /></div>
        </div>
        <span className="pl-[21px] leading-3 text-[#6d7f96]">Portapa</span>
      </div>
      <div className="flex min-h-0 flex-1 flex-col bg-[#c8d3e3] pt-[5px] pl-[5px]">
        <div className="flex min-h-0 flex-1 flex-col border-t-2 border-l-2 border-dashed border-[#3399ff] bg-[#f0f0f0]">
          <div className={`${UI} flex h-5 shrink-0 items-center gap-[3px] border-b border-[#222] bg-gradient-to-r from-[#7f8792] to-[#b9bfc6] whitespace-nowrap`}><Icon name="ise" size="size-[14px]" />ISE Pro</div>
          <div className={`${UI} flex h-[23px] shrink-0 items-center gap-[6px] border-b border-[#a0a0a0] text-[#999]`}><Icon name="docBlue" size="size-[15px]" />File</div>
          <div className="flex h-[26px] shrink-0 items-center gap-[6px] border-b border-[#a0a0a0]"><span className="h-5 w-[6px] shrink-0 border-r-2 border-dotted border-[#b0b0b0]" /><Icon name="new" /><Icon name="open" /></div>
          <div className={`${SMALL} mt-[2px] flex h-[18px] shrink-0 items-center border-y border-[#a0a0a0] pl-px`}>Design</div>
          <div className="flex min-h-0 flex-1">
            <div className="flex w-[25px] shrink-0 flex-col items-center border-r border-[#a0a0a0] pt-1">
              <MiniTools names={["newSrcGrey", "plusDocGrey", "plusDocGrey", "|", "modules", "|", "minusDocGrey", "|", "chipCheck", "docCheck", "|", "tileV"]} />
              <span className="mt-4 h-px w-full shrink-0 bg-[#a0a0a0]" />
              <span className="h-[6px] shrink-0" />
              <MiniTools names={["runGrey", "|", "procGrey", "procStop", "|", "procStop"]} />
            </div>
            <div className={`${SMALL} flex min-w-0 flex-1 flex-col overflow-hidden`}>
              <span className="flex h-[23px] shrink-0 items-center pl-[2px]">View:</span>
              <span className="flex h-[18px] shrink-0 items-center border border-r-0 border-[#828790] bg-white">Behav</span>
              <span className={`${UI} mt-[2px] flex h-6 shrink-0 items-center border-b border-[#d5d5d5] bg-[#f8f8f8] pl-[2px]`}>Hiera</span>
              <div className="flex h-[154px] shrink-0 flex-col gap-1 bg-white pt-[2px] pl-[26px]">
                <Icon name="device" />
                <span className="-ml-5 flex items-center gap-[11px]"><span className="flex size-[9px] shrink-0 items-center justify-center border border-[#999]"><span className="h-px w-[5px] bg-[#336]" /></span><Icon name="chipBlack" /></span>
                <span className="size-[9px] border border-[#999]" />
              </div>
              <span className="flex h-[35px] shrink-0 items-center border-t border-[#a0a0a0] bg-[#f0f0f0] pl-[6px]"><Icon name="sync" /></span>
              <span className={`${UI} flex h-[23px] shrink-0 items-center border-y border-[#d5d5d5] bg-[#f8f8f8] pl-px`}>Proce</span>
              <div className="flex flex-1 gap-2 bg-white pt-[2px] pl-[6px]"><span className="mt-[3px] flex size-[9px] shrink-0 items-center justify-center border border-[#999]"><span className="h-px w-[5px] bg-[#336]" /></span><Icon name="hammer" /></div>
            </div>
          </div>
        </div>
      </div>
    </div>
  );
}

/* ------------------------------------------------------------------ */
/* Task bar                                                             */
/* ------------------------------------------------------------------ */

const TASKS: { label: string; open?: boolean; bright?: boolean; art: React.ReactNode }[] = [
  { label: "Explorer", open: true, art: <><path d="M1 3h6l1 2h7v10h-14z" fill="#f4dc86" /><path d="M1 6h14v3h-14z" fill="#fff3bf" /><path d="M4 15v-4c0-2 8-2 8 0v4h-2v-3h-4v3z" fill="#5fb7e6" /></> },
  { label: "Firefox", open: true, art: <><circle cx="8" cy="8" r="7.500" fill="#e8701c" /><circle cx="9" cy="6.500" r="4.800" fill="#2f6fc4" /><path d="M1 5c2 1 3 3 6 3 2 0 3 1 2 2.500-2 1-4 0-4-2-1 5 7 6 9 0 0 4-3 7-7 7s-7-4-6-10.500z" fill="#f7a21c" /></> },
  { label: "League of Legends", art: <><rect x=".5" y=".5" width="15" height="15" fill="#12335e" stroke="#b98a2e" strokeWidth="1.400" /><path d="M4 2.500h4v9h2.500l1.500-2v4h-8l1.300-1.500v-8z" fill="#f1c84b" /></> },
  { label: "Hearthstone", art: <><rect x=".5" y=".5" width="15" height="15" rx="2" fill="#284a78" stroke="#c88a2a" strokeWidth="1.500" /><circle cx="8" cy="8" r="5" fill="#3d9fe0" stroke="#e8b54a" strokeWidth="1.500" /><path d="M8 5.500c3 0 3 5 0 5-2 0-2-3 0-3" stroke="#fff" fill="none" /></> },
  { label: "Diablo", art: <><path d="M8 0l2 6 6 2-6 2-2 6-2-6-6-2 6-2z" fill="#6b3a1e" /><path d="M5 3.500h4c5 0 5 9 0 9h-4z" fill="#2a1208" stroke="#ef9a3c" strokeWidth="1.500" /></> },
  { label: "VirtualBox", art: <><path d="M8 0l7 3-1 10-6 3-6-3-1-10z" fill="#8fa7c2" /><path d="M1 3l7 3 7-3-7-3z" fill="#d6e2ee" /><path d="M8 6v10" stroke="#3a4f6c" /><path d="M10 8l3-1v5l-3 1.500z" fill="#e8eef5" /></> },
  { label: "OpenOffice", art: <><circle cx="8" cy="8" r="7.500" fill="#1687c9" /><path d="M2 8c2-1.500 4-1 5 .5 1-2 4-2 7-2-3 .5-4 1-6 2.500-2-1.500-4-1.500-6-1zM6 5c2-1 3 0 3.500.7 1-.9 2-1 4-1" stroke="#fff" fill="none" strokeWidth="1.200" /></> },
  { label: "Steam", art: <><circle cx="8" cy="8" r="7.500" fill="#14456e" /><path d="M1 10l5 2 5-6" stroke="#fff" strokeWidth="2.500" fill="none" /><circle cx="11" cy="5.500" r="2.700" fill="#14456e" stroke="#fff" strokeWidth="1.400" /><circle cx="5.500" cy="12" r="2" fill="#fff" /></> },
  { label: "Unity", art: <path d="M2 8l7-6 4-.5 1 4-2 2.500 2 2.500-1 4-4-.5zM6 8l4 .8 2 4M6 8l4-.8 2-4" fill="#fff" stroke="#14202e" strokeWidth="1.300" /> },
  { label: "Cube", art: <><path d="M1 3l7-2.500 7 2.500v9l-7 4-7-4z" fill="#8fd0e8" /><path d="M1 3l7 2.500 7-2.500-7-2.500z" fill="#e8f8fd" /><path d="M8 5.500l7-2.500v9l-7 4z" fill="#b8e2f0" /></> },
  { label: "Launcher", art: <path d="M1 0l4 1 3 7 7 0-2 5-5 3z" fill="#2f9bf0" /> },
  { label: "Scene Builder", art: <><rect x="1" y="1" width="14" height="14" fill="#4e4a80" /><path d="M3 3.500h6M11 3.500h3M3 6h9M3 8.500h4M9 8.500h5M3 12h3M8 12h6" stroke="#c9c6ea" strokeWidth="1.300" /></> },
  { label: "ModelSim", art: <><rect x="0" y="0" width="16" height="3" fill="#1f2fe0" stroke="#fff" strokeWidth=".8" /><path d="M1.500 15v-10h3l3.500 5 3.500-5h3v10M4.500 15v-5M11.500 15v-5M1 15h4M11 15h4" stroke="#fff" strokeWidth="1.600" fill="none" /></> },
  { label: "Visual Studio", art: <><path d="M11 0l4 2v12l-4 2-10-5v-6z" fill="#68217a" /><path d="M3 5.500l8 6v-7l-8 6z" fill="none" stroke="#fff" strokeWidth="1.600" /></> },
  { label: "GitHub", art: <><circle cx="8" cy="8" r="7.500" fill="#fff" /><path d="M3.500 4l2 1h5l2-1c1 5 0 8-4.500 8s-5.500-3-4.500-8z" fill="#4b2a6b" /></> },
  { label: "Eclipse", art: <><ellipse cx="8" cy="8" rx="6.500" ry="7.500" fill="#7674c4" /><path d="M11.500 4c-6-2-7 3.500-3 4-5 .5-4 6 3 4" stroke="#fff" strokeWidth="1.700" fill="none" /></> },
  { label: "Terminal", art: <path d="M0 2h16v3h-16zM4 6.500h8v2.500h-8zM6 10.500h4v4h-4z" fill="#5c6ef0" /> },
  { label: "Reader", open: true, art: <><rect x="0" y="0" width="16" height="16" fill="#c8100c" /><path d="M2.500 13c3-2 5-6 5.500-10.500.5 4 2 6.500 5.500 8-4-.8-7.500 0-11 2.500z" stroke="#fff" strokeWidth="1.200" fill="none" /></> },
  { label: "ISE", open: true, art: ICONS.ise },
  { label: "ISim", open: true, bright: true, art: ICONS.isim },
  { label: "Paint", open: true, art: palette },
];

function Taskbar() {
  return (
    <footer className="relative flex h-[30px] shrink-0 items-center border-t border-[#46566a] bg-[linear-gradient(90deg,#16273a_0,#1a2c40_20%,#0f1b2c_35%,#0d1624_55%,#14242f_66%,#1c4a4a_72%,#23635c_76%,#1b3a36_77%,#9aa184_79%,#a9ad93_84%,#7d6a5c_86%,#7a3043_87%,#8d8f77_89%,#a3a78c_93%,#6e2b3d_96%,#8a4354_98%,#5c4034)] text-white">
      <button aria-label="Inicio" className="absolute bottom-[-3px] left-[9px] size-9">
        <svg viewBox="0 0 36 36" className="size-9">
          <circle cx="18" cy="18" r="17" fill="#1f6fa8" stroke="#a9c6da" strokeWidth="1.500" />
          <ellipse cx="18" cy="10" rx="14" ry="8" fill="#fff" opacity=".3" />
          <ellipse cx="18" cy="29" rx="10" ry="5" fill="#5fdcf5" opacity=".6" />
          <path d="M10 10c3-2 5-2 7-1l-2 8c-2-1-4-1-7 1z" fill="#e8542a" />
          <path d="M18.500 9.500c3 1 5 1 8-1l-2 8c-3 2-5 2-8 1z" fill="#8cc63e" />
          <path d="M7.500 19.500c3-2 5-2 7-1l-2 7.500c-2-1-4-1-7 1z" fill="#39a0e8" />
          <path d="M16 19c3 1 5 1 8-1l-2 8c-3 2-5 2-8 1z" fill="#fcc419" />
        </svg>
      </button>
      <div className="ml-[58px] flex h-full items-center gap-1">
        {TASKS.map((t) => (
          <button
            key={t.label}
            aria-label={t.label}
            className={`flex h-[29px] w-[42px] items-center justify-center ${t.open ? (t.bright ? "rounded-xs border border-white/60 bg-gradient-to-b from-white/80 to-white/50" : "rounded-xs border border-white/40 bg-gradient-to-b from-white/40 to-white/15") : ""}`}
          >
            <svg viewBox="0 0 16 16" className="size-4">{t.art}</svg>
          </button>
        ))}
      </div>
      <div className={`${UI} ml-auto flex h-full items-center`}>
        <span className="mr-[15px] mb-1">ES</span>
        <svg viewBox="0 0 8 5" className="mr-[14px] h-[5px] w-2"><path d="M4 0l4 5h-8z" fill="#fff" /></svg>
        <svg viewBox="0 0 14 16" className="mr-[10px] h-4 w-[14px]"><rect x="1" y="2" width="8" height="13" fill="#444" stroke="#fff" /><path d="M6 6h8v4l-2 1v3h-3v-3l-3-1zM8 6v-4M12 6v-4" fill="#fff" stroke="#fff" /></svg>
        <svg viewBox="0 0 16 12" className="mr-[9px] h-3 w-4"><path d="M0 10h2v2h-2zM3.500 8h2v4h-2zM7 5h2v7h-2zM10.500 3h2v9h-2zM14 0h2v12h-2z" fill="#fff" /></svg>
        <svg viewBox="0 0 16 14" className="mr-[33px] h-[14px] w-4"><path d="M0 5h3l4-4v12l-4-4h-3z" fill="#fff" /><path d="M9 5c1 1 1 3 0 4M11 3c2.500 2.500 2.500 5.500 0 8M13 1c3.500 3.500 3.500 8.500 0 12" stroke="#fff" fill="none" /></svg>
        <span className="mr-[27px]">20:12</span>
        <button aria-label="Mostrar escritorio" className="h-full w-[14px] border-l border-white/40 bg-black/30" />
      </div>
    </footer>
  );
}

function StatusBar() {
  const cell = "flex w-[156px] shrink-0 items-center gap-[6px] border-r border-[#d0d0d0] pl-1";
  const wide = "flex w-[156px] shrink-0 items-center gap-[6px] border-r border-[#d0d0d0] pl-[6px] whitespace-nowrap";
  return (
    <div className={`${UI} flex h-[26px] shrink-0 border-t border-[#8a8a8a] bg-[#f0edec] text-black`}>
      <span className={cell}><Icon name="move" size="size-3" /></span>
      <span className={wide}><Icon name="selSize" size="size-[14px]" /></span>
      <span className={wide}><Icon name="imgSize" size="size-[14px]" />2646 × 768píxeles</span>
      <span className={wide}><Icon name="disk" size="size-[14px]" />Tamaño: 386,1KB</span>
      <span className="flex-1 border-r border-[#d0d0d0]" />
      <label className="flex w-[199px] items-center justify-end gap-[7px] pr-1">
        <span>100%</span>
        <button aria-label="Alejar" className="flex size-4 items-center justify-center rounded-full border border-[#777] bg-white"><span className="h-[2px] w-2 bg-[#555]" /></button>
        <input
          type="range"
          aria-label="Zoom"
          defaultValue={50}
          className="mx-[2px] h-4 w-[84px] appearance-none bg-transparent [&::-webkit-slider-runnable-track]:h-[3px] [&::-webkit-slider-runnable-track]:border [&::-webkit-slider-runnable-track]:border-[#a8a8a8] [&::-webkit-slider-runnable-track]:bg-[#e0e0e0] [&::-webkit-slider-thumb]:-mt-[7px] [&::-webkit-slider-thumb]:h-4 [&::-webkit-slider-thumb]:w-[9px] [&::-webkit-slider-thumb]:appearance-none [&::-webkit-slider-thumb]:rounded-b-sm [&::-webkit-slider-thumb]:border [&::-webkit-slider-thumb]:border-[#777] [&::-webkit-slider-thumb]:bg-[#f0f0f0]"
        />
        <button aria-label="Acercar" className="flex size-4 items-center justify-center rounded-full border border-[#777] bg-white">
          <svg viewBox="0 0 8 8" className="size-2"><path d="M4 0v8M0 4h8" stroke="#444" strokeWidth="2" /></svg>
        </button>
      </label>
    </div>
  );
}

function Paint() {
  return (
    <div className="flex min-h-0 min-w-0 flex-1 flex-col">
      <header className={`${PAINT_TITLE} ${UI} flex h-[22px] shrink-0 items-start border-b border-[#2c3a48] pr-[3px]`}>
        <span className="flex h-[21px] flex-1 items-center text-black">
          <Icon name="palette" />
          <span className="mr-[10px] ml-[7px] h-3 w-px bg-[#556]" />
          <Icon name="save" size="size-[14px]" />
          <span className="w-[9px]" /><Icon name="undoLight" size="size-[14px]" />
          <span className="w-2" /><Icon name="redoLight" size="size-[14px]" />
          <span className="mr-[9px] ml-[7px] flex"><Tri dir="down" tone="text-black" /></span>
          <span className="mr-[6px] h-3 w-px bg-[#556]" />
          cnt_epp_tb simulacion señales tb - Paint
        </span>
        <CaptionButtons active={false} />
      </header>
      <nav className={`${RIB} flex h-[23px] shrink-0 items-start bg-[#dfe9f5]`}>
        <FileButton />
        <button className="relative z-10 mt-[2px] ml-[3px] h-[22px] w-[51px] rounded-t-[3px] border border-b-0 border-[#b6c8dd] bg-[#f5f9fe]">Inicio</button>
        <button className="ml-[17px] h-full">Ver</button>
        <span className="flex-1" />
        <button aria-label="Ayuda" className="mt-1 mr-1"><Icon name="helpRound" size="size-[14px]" /></button>
      </nav>
      <Ribbon />
      <div className="flex min-h-0 flex-1">
        <div className="flex min-w-0 flex-1 overflow-hidden bg-gradient-to-b from-[#c5cfdf] to-[#dce6f4] pt-[6px] pl-[5px]">
          <div className="flex w-[1280px] shrink-0">
            <Isim
              editable
              traces={RIGHT_TRACES}
              scale={99.5}
              endX={713}
              cursor={false}
              selected={12}
              valueWidth="w-[63px]"
              waveThumb="w-[217px]"
            />
          </div>
          <NestedPaint />
        </div>
        <div className="flex w-[17px] shrink-0 flex-col items-center bg-gradient-to-r from-[#e6e6e6] to-[#f4f4f4]">
          <button aria-label="Subir" className="flex h-[18px] items-center"><Tri dir="up" /></button>
          <div className="flex h-[372px] w-[15px] flex-col items-center justify-center gap-px rounded-xs border border-[#979797] bg-gradient-to-r from-[#f4f4f4] from-50% to-[#cfcfd1] to-50%">
            {[0, 1, 2].map((i) => <span key={i} className="h-[2px] w-2 border-t border-[#444] bg-white" />)}
          </div>
          <span className="flex-1" />
          <button aria-label="Bajar" className="flex h-[18px] items-center"><Tri dir="down" /></button>
        </div>
      </div>
      <div className="flex h-[17px] shrink-0 bg-[#f0f0f0] pr-[17px]"><HScroll thumb="w-[667px]" grip /></div>
      <StatusBar />
      <Taskbar />
    </div>
  );
}

export default function App() {
  return (
    <div className="grid h-screen grid-cols-[1280fr_1366fr] overflow-hidden bg-black leading-none">
      <div className="flex min-h-0 min-w-0 flex-col pb-12">
        <Isim
          editable={false}
          traces={LEFT_TRACES}
          scale={91}
          endX={730}
          cursor
          selected={-1}
          valueWidth="w-[45px]"
          waveThumb="w-[231px]"
          valueThumb="w-[9px]"
          status="Sim Time: 8,000,000 ps"
        />
      </div>
      <Paint />
    </div>
  );
}
